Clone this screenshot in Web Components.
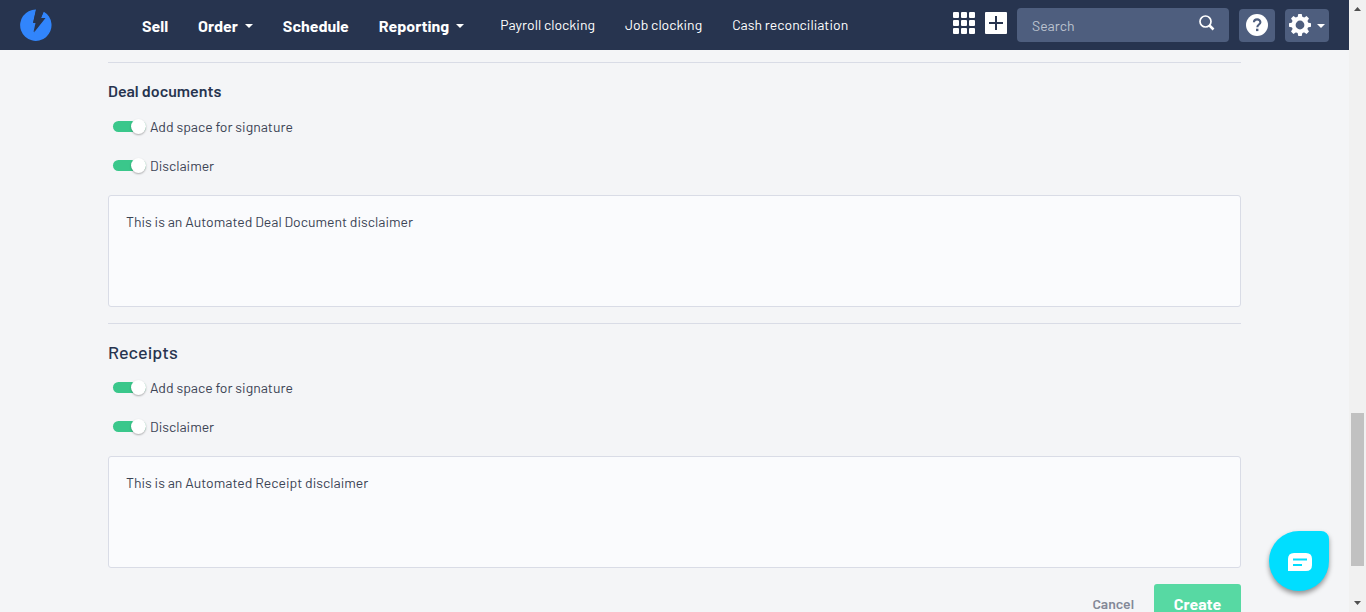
<!DOCTYPE html>
<html lang="en">
<head>
<meta charset="utf-8">
<meta name="viewport" content="width=device-width, initial-scale=1">
<title>Document settings</title>
<style>
html, body { margin: 0; height: 100%; }
body { font-family: Barlow, Roboto, "Liberation Sans", sans-serif; font-size: 14px; color: #3b4354; background: #f4f5f7; overflow: hidden; }
</style>
</head>
<body>
<app-shell>
  <top-bar slot="header">
    <nav-link strong>Sell</nav-link>
    <nav-link strong menu>Order</nav-link>
    <nav-link strong>Schedule</nav-link>
    <nav-link strong menu>Reporting</nav-link>
    <nav-link class="first-plain">Payroll clocking</nav-link>
    <nav-link>Job clocking</nav-link>
    <nav-link>Cash reconciliation</nav-link>
  </top-bar>
  <doc-section heading="Deal documents" text="This is an Automated Deal Document disclaimer">
    <toggle-row>Add space for signature</toggle-row>
    <toggle-row>Disclaimer</toggle-row>
  </doc-section>
  <doc-section large heading="Receipts" text="This is an Automated Receipt disclaimer">
    <toggle-row>Add space for signature</toggle-row>
    <toggle-row>Disclaimer</toggle-row>
  </doc-section>
  <form-actions></form-actions>
  <chat-launcher slot="overlay"></chat-launcher>
  <scroll-rail slot="rail"></scroll-rail>
</app-shell>
<script>
const define = (name, render, ready) => customElements.define(name, class extends HTMLElement {
  connectedCallback() {
    if (this.shadowRoot) return;
    this.attachShadow({ mode: 'open' }).innerHTML = render(this);
    if (ready) ready(this);
  }
});

define('app-shell', () => `
<style>
:host { display: flex; height: 100vh; }
.page { position: relative; flex: 1; min-width: 0; overflow: hidden; }
main { padding: 12px 108px 0; }
</style>
<div class="page">
  <slot name="header"></slot>
  <main><slot></slot></main>
  <slot name="overlay"></slot>
</div>
<slot name="rail"></slot>`);

define('nav-link', el => `
<style>
:host { display: block; white-space: nowrap; }
a { display: flex; align-items: center; gap: 7px; color: #fff; text-decoration: none; font-size: 14px; line-height: 20px; }
:host([strong]) a { font-size: 16px; font-weight: 700; padding-top: 2px; }
svg { width: 8px; height: 4px; }
</style>
<a href="#"><slot></slot>${el.hasAttribute('menu') ? '<svg viewBox="0 0 8 4"><path fill="#fff" d="M0 0h8L4 4z"/></svg>' : ''}</a>`);

define('top-bar', () => `
<style>
:host { display: flex; align-items: center; height: 50px; background: #27344f; padding: 0 20px; }
.logo { display: block; width: 32px; height: 32px; margin-right: 90px; }
.logo svg { display: block; }
nav { display: flex; align-items: center; gap: 30px; flex: 1; }
::slotted(.first-plain) { margin-left: 6px; }
.tools { display: flex; align-items: center; }
button { border: 0; padding: 0; background: none; color: #fff; display: flex; align-items: center; justify-content: center; }
.apps { margin: 0 10px 4px 0; }
.add { margin: 0 10px 4px 0; }
.search { display: flex; align-items: center; width: 212px; height: 34px; box-sizing: border-box; padding: 0 14px 0 15px; border-radius: 4px; background: #4e5e7e; }
input { flex: 1; min-width: 0; border: 0; padding: 2px 0 0; background: none; outline: none; color: #fff; font: inherit; line-height: 20px; }
input::placeholder { color: #bdc4d0; opacity: 1; }
.search button { margin-bottom: 4px; }
.box { height: 33px; margin-left: 10px; border-radius: 4px; background: #4e5e7e; }
.help { width: 36px; }
.gear { width: 44px; gap: 6px; }
</style>
<a class="logo" href="#" aria-label="Home"><svg width="32" height="32" viewBox="0 0 32 32"><path fill="#3185fc" d="M16 .500A15.700 15.700 0 1 0 23.500 2.500L21 9L25 9L13.500 23L15.500 14L13 14Z"/><path fill="#27344f" d="M16.300 0L13.300 13.200H16.700L14 23.500L25.500 9H21L24 2L20 0Z"/></svg></a>
<nav aria-label="Main"><slot></slot></nav>
<div class="tools">
  <button class="apps" aria-label="Apps"><svg width="22" height="22" fill="#fff"><rect width="6" height="6" rx="1"/><rect x="8" width="6" height="6" rx="1"/><rect x="16" width="6" height="6" rx="1"/><rect y="8" width="6" height="6" rx="1"/><rect x="8" y="8" width="6" height="6" rx="1"/><rect x="16" y="8" width="6" height="6" rx="1"/><rect y="16" width="6" height="6" rx="1"/><rect x="8" y="16" width="6" height="6" rx="1"/><rect x="16" y="16" width="6" height="6" rx="1"/></svg></button>
  <button class="add" aria-label="Add"><svg width="22" height="22"><rect width="22" height="22" rx="1" fill="#fff"/><path stroke="#27344f" stroke-width="2" d="M11 4v14M4 11h14"/></svg></button>
  <div class="search"><input type="text" placeholder="Search" aria-label="Search"><button aria-label="Run search"><svg width="16" height="16" fill="none" stroke="#fff"><circle cx="6.500" cy="6.500" r="5.500" stroke-width="1.700"/><path stroke-width="2.500" d="M10.500 10.500L14.500 14.500"/></svg></button></div>
  <button class="box help" aria-label="Help"><svg width="22" height="22"><circle cx="11" cy="11" r="11" fill="#fff"/><path fill="none" stroke="#4e5e7e" stroke-width="2.100" d="M7.900 8.300C8 6.400 9.200 5.400 11.100 5.400C13.200 5.400 14.400 6.600 14.400 8.200C14.400 10.500 11.300 10.600 11.300 13.300"/><rect x="10" y="14.700" width="2.400" height="2.400" fill="#4e5e7e"/></svg></button>
  <button class="box gear" aria-label="Settings"><svg width="22" height="22" viewBox="-11 -11 22 22"><circle r="6.400" fill="none" stroke="#fff" stroke-width="4"/><g fill="#fff"><path d="M-2.500-7.500L-1.700-11H1.700L2.500-7.500zM-2.500 7.500L-1.700 11H1.700L2.500 7.500zM-7.500-2.500L-11-1.700V1.700L-7.500 2.500zM7.500-2.500L11-1.700V1.700L7.500 2.500z"/><path transform="rotate(45)" d="M-2.500-7.500L-1.700-11H1.700L2.500-7.500zM-2.500 7.500L-1.700 11H1.700L2.500 7.500zM-7.500-2.500L-11-1.700V1.700L-7.500 2.500zM7.500-2.500L11-1.700V1.700L7.500 2.500z"/></g></svg><svg width="8" height="5"><path fill="#fff" d="M0 1h8L4 5z"/></svg></button>
</div>`);

define('toggle-row', () => `
<style>
:host { display: flex; align-items: center; height: 39px; }
label { display: flex; align-items: center; gap: 4px; padding: 0 0 2px 5px; line-height: 20px; }
input { appearance: none; display: flex; align-items: center; justify-content: flex-end; width: 33px; height: 11px; margin: 0; border-radius: 6px; background: #3ac78b; }
input:not(:checked) { justify-content: flex-start; background: #c3c8d1; }
input::before { content: ""; width: 15px; height: 15px; flex: none; border-radius: 50%; background: #fff; box-shadow: 0 1px 2px rgba(0,0,0,.3); }
</style>
<label><input type="checkbox" role="switch" checked><span><slot></slot></span></label>`);

define('doc-section', () => `
<style>
:host { display: block; border-top: 1px solid #d9dce6; padding: 16px 0; }
h2 { margin: 0 0 5px; font-size: 16px; line-height: 24px; font-weight: 600; color: #27344f; }
:host([large]) h2 { font-size: 18px; font-weight: 500; }
textarea { display: block; box-sizing: border-box; width: 100%; height: 112px; margin-top: 9px; padding: 16px 17px; border: 1px solid #d9dce6; border-radius: 3px; background: #fafbfd; color: inherit; font: inherit; line-height: 20px; resize: none; outline: none; }
</style>
<h2></h2>
<slot></slot>
<textarea></textarea>`, el => {
  const heading = el.getAttribute('heading');
  el.shadowRoot.querySelector('h2').textContent = heading;
  const area = el.shadowRoot.querySelector('textarea');
  area.value = el.getAttribute('text');
  area.setAttribute('aria-label', heading + ' disclaimer');
});

define('form-actions', () => `
<style>
:host { display: flex; justify-content: flex-end; gap: 20px; }
button { height: 40px; border: 0; padding: 0; font: inherit; line-height: 20px; }
.cancel { background: none; color: #838897; font-weight: 600; }
.create { min-width: 87px; border-radius: 3px; background: #57d9a3; color: #fff; font-size: 16px; font-weight: 700; }
</style>
<button class="cancel">Cancel</button><button class="create">Create</button>`);

define('chat-launcher', () => `
<style>
:host { display: block; position: absolute; right: 20px; bottom: 21px; }
button { display: flex; align-items: center; justify-content: center; width: 60px; height: 60px; padding: 2px 0 0 1px; border: 0; border-radius: 30px 8px 30px 30px; background: #00deff; box-shadow: 0 3px 5px rgba(0,0,0,.4); }
</style>
<button aria-label="Open chat"><svg width="24" height="18"><path fill="#fff" d="M6 0H18Q24 0 24 6V12Q24 18 18 18H0V6Q0 0 6 0Z"/><path stroke="#00deff" stroke-width="2" d="M5 6.500H19M5 12H14"/></svg></button>`);

define('scroll-rail', () => `
<style>
:host { display: flex; flex-direction: column; width: 17px; background: #f1f1f1; }
svg { flex: none; }
.before { flex: 396; }
.thumb { flex: 153; margin: 0 2px; background: #c1c1c1; }
.after { flex: 29; }
</style>
<svg width="17" height="17"><path fill="#505050" d="M5 11h7L8.500 7z"/></svg>
<div class="before"></div><div class="thumb"></div><div class="after"></div>
<svg width="17" height="17"><path fill="#505050" d="M5 6h7L8.500 10z"/></svg>`);
</script>
</body>
</html>
